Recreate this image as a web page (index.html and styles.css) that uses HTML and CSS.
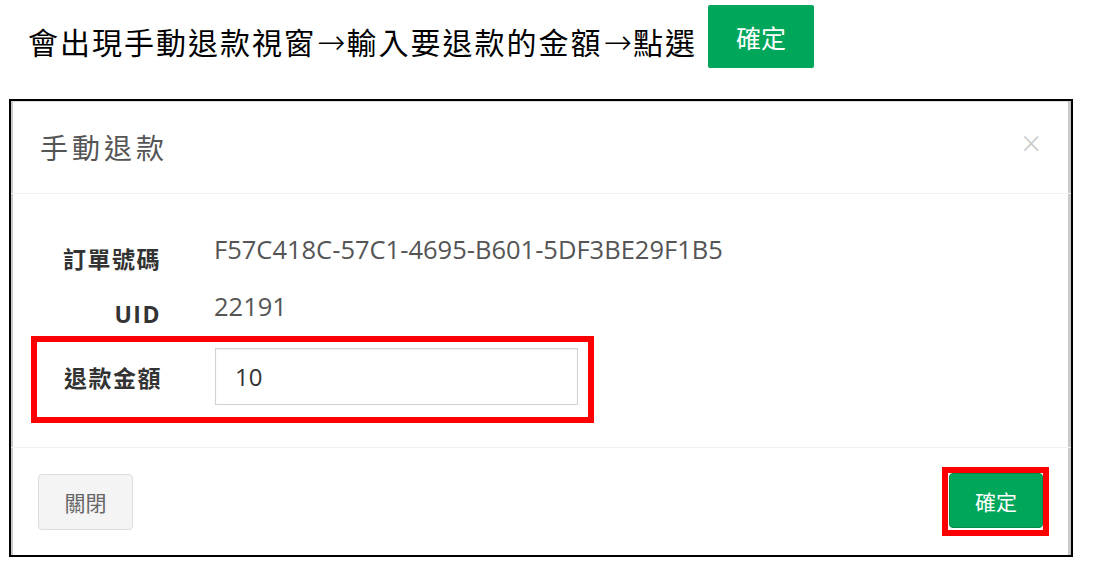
FILE: index.html
```html
<!DOCTYPE html>
<html>
<head>
    <meta charset="UTF-8">
    <title>手動退款</title>
    <link rel="stylesheet" href="styles.css">
</head>
<body>
    <div class="intro">
        <span class="intro-text">會出現手動退款視窗<span class="arrow">→</span>輸入要退款的金額<span class="arrow">→</span>點選</span>
        <span class="btn-demo">確定</span>
    </div>

    <div class="modal">
        <div class="modal-header">
            <h4 class="modal-title">手動退款</h4>
            <span class="close">×</span>
        </div>

        <div class="modal-body">
            <div class="info-row">
                <label>訂單號碼</label>
                <div class="static">F57C418C-57C1-4695-B601-5DF3BE29F1B5</div>
            </div>
            <div class="info-row">
                <label>UID</label>
                <div class="static">22191</div>
            </div>
            <div class="mark-box">
                <div class="amount-row">
                    <label>退款金額</label>
                    <input type="text" name="amount" value="10">
                </div>
            </div>
        </div>

        <div class="modal-footer">
            <button class="btn-default">關閉</button>
            <span class="mark-btn"><button class="btn-success">確定</button></span>
        </div>
    </div>
</body>
</html>
```

FILE: styles.css
```css
body { margin: 0; background: #fff; font-family: "Open Sans", "Noto Sans CJK TC", sans-serif; }

.intro { display: flex; align-items: center; gap: 11px; height: 63px; padding: 5px 0 0 28px; }
.intro-text { font-family: "Liberation Sans", "Noto Sans CJK TC", sans-serif; font-size: 30px; letter-spacing: 2px; color: #000; padding-top: 8px; }
.arrow { font-family: "DejaVu Sans", sans-serif; font-size: 34px; font-weight: 200; letter-spacing: 0; margin: 0 1px; }
.btn-demo { display: flex; align-items: center; justify-content: center; width: 106px; height: 63px; background: #00a65a; color: #fff; font-size: 25px; border-radius: 2px; }

.modal { box-sizing: border-box; width: 1064px; height: 458px; margin: 31px 0 0 9px; border: 2px solid #000; display: flex; flex-direction: column;
         box-shadow: inset 2px 0 0 #c8c8c8, inset -3px 0 0 #c8c8c8, inset 0 1px 0 #dcdcdc; }

.modal-header { display: flex; align-items: center; justify-content: space-between; height: 92px; padding: 0 30px 0 29px; border-bottom: 1px solid #f2f2f2; }
.modal-title { margin: 0; font-size: 28px; font-weight: normal; letter-spacing: 4px; color: #555; }
.close { font-size: 34px; color: #c8c8c8; margin-top: -8px; font-weight: 300; }

.modal-body { padding: 37px 0 24px 0; }
.info-row { display: grid; grid-template-columns: 150px 1fr; column-gap: 53px; height: 48px; }
.info-row + .info-row { margin-top: 9px; }
label { text-align: right; font-size: 23px; font-weight: bold; color: #333; letter-spacing: 1.5px; }
.info-row label { padding-top: 10px; }
.static { font-size: 25.5px; color: #555; line-height: 36px; }

.mark-box { box-sizing: border-box; width: 563px; margin-left: 20px; border: 6px solid #f00; padding: 6px 10px 12px 0; }
.amount-row { display: grid; grid-template-columns: 125px 1fr; column-gap: 53px; align-items: center; }
input { box-sizing: border-box; width: 363px; height: 57px; border: 1px solid #d2d2d2; box-shadow: inset 0 1px 2px #eee; padding: 0 19px; font-family: inherit; font-size: 24px; color: #333; }

.modal-footer { flex: 1; display: flex; align-items: center; justify-content: space-between; padding: 0 22px 0 27px; border-top: 1px solid #f2f2f2; }
button { font-family: inherit; font-size: 21px; cursor: pointer; border-radius: 4px; }
.btn-default { width: 95px; height: 56px; background: #f4f4f4; border: 1px solid #ddd; color: #666; }
.mark-btn { display: flex; border: 6px solid #f00; padding: 0 0 2px 1px; }
.btn-success { width: 94px; height: 55px; background: #00a65a; border: 1px solid #008d4c; color: #fff; }
```
